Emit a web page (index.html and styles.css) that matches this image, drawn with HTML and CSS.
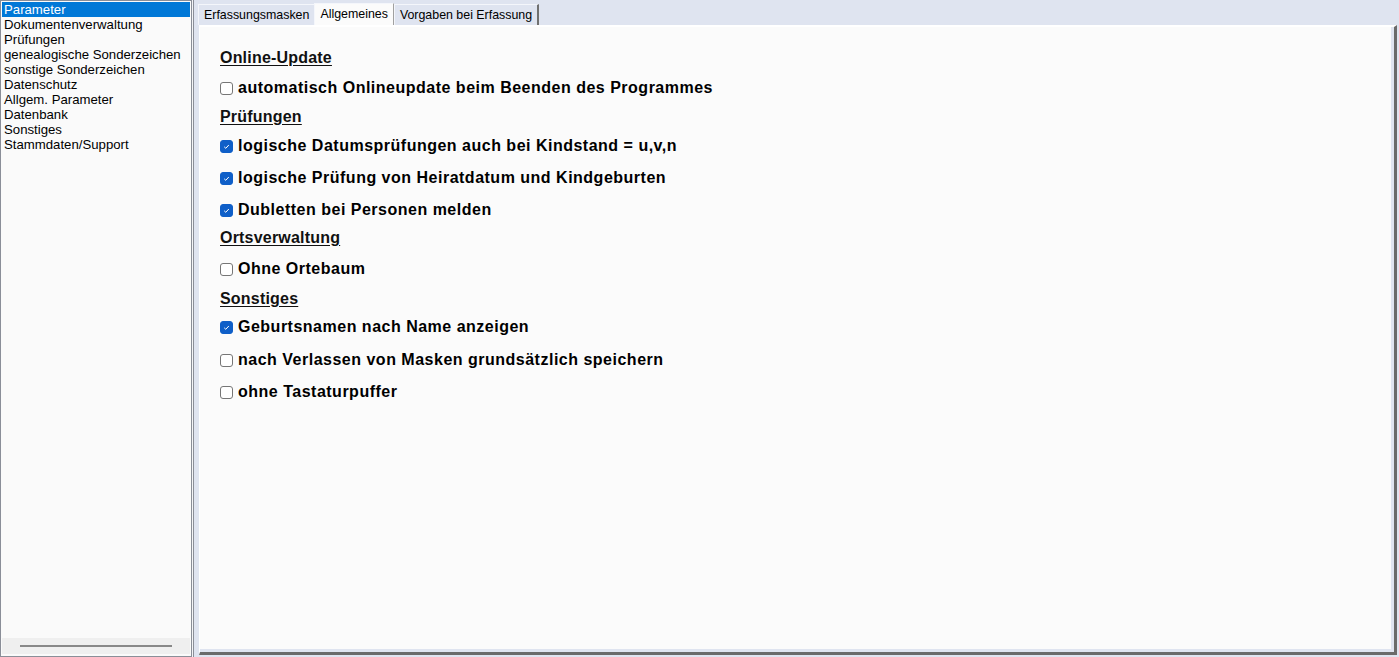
FILE: index.html
```html
<!DOCTYPE html>
<html lang="de">
<head>
<meta charset="utf-8">
<link rel="stylesheet" href="styles.css">
</head>
<body>
<div class="app">
  <aside class="sidebar">
    <ul class="nav">
      <li class="sel">Parameter</li>
      <li>Dokumentenverwaltung</li>
      <li>Prüfungen</li>
      <li>genealogische Sonderzeichen</li>
      <li>sonstige Sonderzeichen</li>
      <li>Datenschutz</li>
      <li>Allgem. Parameter</li>
      <li>Datenbank</li>
      <li>Sonstiges</li>
      <li>Stammdaten/Support</li>
    </ul>
    <div class="hscroll"><div class="thumb"></div></div>
  </aside>
  <main class="main">
    <div class="tabs">
      <div class="tab">Erfassungsmasken</div>
      <div class="tab active">Allgemeines</div>
      <div class="tab last">Vorgaben bei Erfassung</div>
    </div>
    <div class="page">
      <div class="inner">
        <h2 class="h g10">Online-Update</h2>
        <label class="row g9"><span class="cb"></span>automatisch Onlineupdate beim Beenden des Programmes</label>
        <h2 class="h g9">Prüfungen</h2>
        <label class="row g12"><span class="cb on"><svg viewBox="0 0 13 13" width="13" height="13"><path d="M4.2 6.8 L5.8 8.3 L8.8 5" fill="none" stroke="#fff" stroke-width="1"/></svg></span>logische Datumsprüfungen auch bei Kindstand = u,v,n</label>
        <label class="row g12"><span class="cb on"><svg viewBox="0 0 13 13" width="13" height="13"><path d="M4.2 6.8 L5.8 8.3 L8.8 5" fill="none" stroke="#fff" stroke-width="1"/></svg></span>logische Prüfung von Heiratdatum und Kindgeburten</label>
        <label class="row g8"><span class="cb on"><svg viewBox="0 0 13 13" width="13" height="13"><path d="M4.2 6.8 L5.8 8.3 L8.8 5" fill="none" stroke="#fff" stroke-width="1"/></svg></span>Dubletten bei Personen melden</label>
        <h2 class="h g11">Ortsverwaltung</h2>
        <label class="row g10"><span class="cb"></span>Ohne Ortebaum</label>
        <h2 class="h g8">Sonstiges</h2>
        <label class="row g13"><span class="cb on"><svg viewBox="0 0 13 13" width="13" height="13"><path d="M4.2 6.8 L5.8 8.3 L8.8 5" fill="none" stroke="#fff" stroke-width="1"/></svg></span>Geburtsnamen nach Name anzeigen</label>
        <label class="row g12"><span class="cb"></span>nach Verlassen von Masken grundsätzlich speichern</label>
        <label class="row"><span class="cb"></span>ohne Tastaturpuffer</label>
      </div>
    </div>
  </main>
</div>
</body>
</html>
```

FILE: styles.css
```css
* { box-sizing: border-box; }
html, body { margin: 0; padding: 0; }
body {
  width: 1399px;
  height: 657px;
  overflow: hidden;
  font-family: "Liberation Sans", Arial, sans-serif;
  background: #f4f5f8;
}
.app {
  display: flex;
  height: 657px;
  gap: 1px;
}
.sidebar {
  width: 192px;
  height: 657px;
  border: 1px solid #8a8e98;
  background: #fafafa;
  display: flex;
  flex-direction: column;
  padding: 1px 1px 2px 1px;
}
.nav {
  list-style: none;
  margin: 0;
  padding: 0;
  flex: 1;
  font-size: 13.2px;
}
.nav li {
  height: 15px;
  line-height: 15px;
  padding-left: 2px;
  color: #000;
  white-space: nowrap;
}
.nav li.sel {
  background: #0078d7;
  color: #fff;
}
.hscroll {
  height: 16px;
  background: #efefef;
  display: flex;
  align-items: center;
  padding: 0 18px;
}
.thumb {
  height: 2px;
  width: 152px;
  background: #888;
}
.main {
  flex: 1;
  height: 657px;
  border-left: 1px solid #8a8e98;
  background: #dfe4f0;
  display: flex;
  flex-direction: column;
  padding: 0 2px 2px 4px;
}
.tabs {
  display: flex;
  height: 25px;
  padding-top: 4px;
  font-size: 12.4px;
}
.tab {
  height: 21px;
  line-height: 20px;
  padding: 0 5px 0 5px;
  color: #000;
  border-top: 1px solid #f4f6fb;
  border-left: 1px solid #f4f6fb;
}
.tab.active {
  margin-top: -1px;
  height: 22px;
  background: #fbfbfb;
  border-right: 1px solid #a0a0a0;
}
.tab.last {
  border-right: 2px solid #707070;
}
.page {
  flex: 1;
  background: #fbfbfb;
  border-top: 2px solid #ffffff;
  border-left: 1px solid #ffffff;
  border-right: 3px solid #6a6a6a;
  border-bottom: 3px solid #6a6a6a;
  box-shadow: inset -3px -3px 0 #dfe4f0;
  margin-left: 1px;
}
.inner {
  padding: 21px 0 0 20px;
  display: flex;
  flex-direction: column;
  align-items: flex-start;
}
.h {
  margin: 0;
  font-size: 16px;
  font-weight: bold;
  text-decoration: underline;
  text-underline-offset: 2px;
  color: #111;
  height: 20px;
  line-height: 20px;
  letter-spacing: 0.2px;
}
.row {
  display: flex;
  align-items: center;
  font-size: 16px;
  font-weight: bold;
  letter-spacing: 0.5px;
  color: #000;
  height: 20px;
  line-height: 20px;
  white-space: nowrap;
}
.g8 { margin-bottom: 8px; }
.g9 { margin-bottom: 9px; }
.g10 { margin-bottom: 10px; }
.g11 { margin-bottom: 11px; }
.g12 { margin-bottom: 12px; }
.g13 { margin-bottom: 13px; }
.cb {
  width: 13px;
  height: 13px;
  border: 1px solid #767676;
  border-radius: 3px;
  background: #fff;
  margin-right: 5px;
  flex: none;
  display: flex;
}
.cb.on {
  background: #0f5fc8;
  border-color: #0f5fc8;
}
.cb svg { margin: -1px; }
```
